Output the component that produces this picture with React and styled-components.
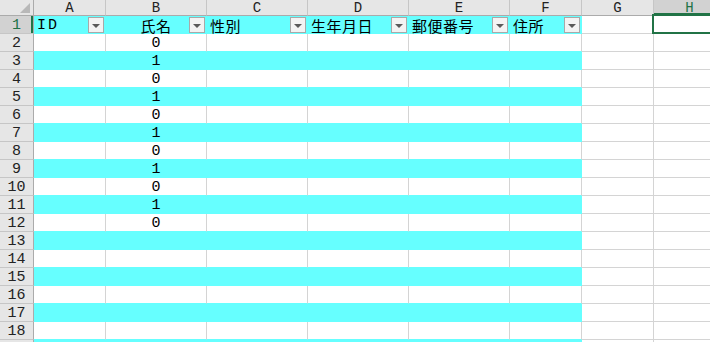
import React from 'react';
import styled, { createGlobalStyle, css } from 'styled-components';

const GlobalStyle = createGlobalStyle`
  html, body {
    margin: 0;
    padding: 0;
    background: #ffffff;
    overflow: hidden;
  }
`;

const COLS = [
  { key: 'A', width: 72 },
  { key: 'B', width: 101 },
  { key: 'C', width: 101 },
  { key: 'D', width: 101 },
  { key: 'E', width: 101 },
  { key: 'F', width: 72 },
  { key: 'G', width: 72 },
  { key: 'H', width: 72 },
];

const TABLE_COLS = 6;
const ROW_COUNT = 19;
const VISIBLE_LABELS = 18;
const SELECTED_COL = 'H';

const HEADERS = [
  { text: 'ID', align: 'left' },
  { text: '氏名', align: 'center' },
  { text: '性別', align: 'left' },
  { text: '生年月日', align: 'left' },
  { text: '郵便番号', align: 'left' },
  { text: '住所', align: 'left' },
];

const CYAN = '#66ffff';
const GRID = '#d4d4d4';
const HEAD_LINE = '#ababab';
const GREEN = '#217346';

const Sheet = styled.div`
  display: grid;
  grid-template-columns: 34px ${COLS.map((c) => c.width + 'px').join(' ')};
  grid-template-rows: 16px;
  grid-auto-rows: 18px;
  width: 800px;
  font-family: "Liberation Mono", "Noto Sans CJK JP", monospace;
  color: #000;
`;

const Corner = styled.div`
  position: relative;
  background: #e6e6e6;
  border-right: 1px solid ${HEAD_LINE};
  border-bottom: 1px solid ${HEAD_LINE};
  box-sizing: border-box;
  &::after {
    content: "";
    position: absolute;
    right: 3px;
    bottom: 2px;
    width: 0;
    height: 0;
    border-left: 10px solid transparent;
    border-bottom: 10px solid #b8b8b8;
  }
`;

const ColHead = styled.div`
  display: flex;
  align-items: center;
  justify-content: center;
  box-sizing: border-box;
  background: ${(p) => (p.$active ? '#d2d2d2' : '#e6e6e6')};
  color: ${(p) => (p.$active ? GREEN : '#222')};
  border-right: 1px solid ${(p) => (p.$active ? '#9b9b9b' : '#c6c6c6')};
  border-bottom: 1px solid ${HEAD_LINE};
  ${(p) => p.$active && css`box-shadow: inset 0 -2px 0 ${GREEN};`}
  font-size: 14px;
  line-height: 1;
  padding-top: 1px;
`;

const RowHead = styled.div`
  display: flex;
  align-items: center;
  justify-content: center;
  box-sizing: border-box;
  background: ${(p) => (p.$active ? '#d2d2d2' : '#e6e6e6')};
  color: ${(p) => (p.$active ? GREEN : '#222')};
  border-right: 1px solid ${HEAD_LINE};
  border-bottom: 1px solid #c6c6c6;
  ${(p) => p.$active && css`box-shadow: inset -2px 0 0 ${GREEN};`}
  font-size: 15px;
  line-height: 1;
  padding-top: 1px;
`;

const Cell = styled.div`
  position: relative;
  display: flex;
  align-items: center;
  justify-content: ${(p) => (p.$align === 'center' ? 'center' : 'flex-start')};
  box-sizing: border-box;
  padding: 1px 3px 0 3px;
  background: ${(p) => (p.$fill ? CYAN : '#ffffff')};
  border-right: 1px solid ${(p) => (p.$fill ? CYAN : GRID)};
  border-bottom: 1px solid ${(p) => (p.$fill || p.$belowFill ? CYAN : GRID)};
  font-size: 15px;
  line-height: 1;
  white-space: nowrap;
`;

const HeaderText = styled.span`
  font-family: "Noto Sans CJK JP", sans-serif;
  font-size: 15px;
  letter-spacing: 0.5px;
  ${(p) => p.$latin && css`font-family: "Liberation Mono", monospace; letter-spacing: 2px;`}
`;

const FilterButton = styled.div`
  position: absolute;
  right: 1px;
  top: 1px;
  width: 16px;
  height: 16px;
  box-sizing: border-box;
  background: #f3f3f3;
  border: 1px solid #a9a9a9;
  display: flex;
  align-items: center;
  justify-content: center;
  &::before {
    content: "";
    width: 0;
    height: 0;
    border-left: 4px solid transparent;
    border-right: 4px solid transparent;
    border-top: 4px solid #5a5a5a;
    margin-top: 1px;
  }
`;

const Selection = styled.div`
  position: absolute;
  left: -2px;
  top: -2px;
  right: -2px;
  bottom: -1px;
  border: 2px solid ${GREEN};
  pointer-events: none;
`;

export default function App() {
  const rows = Array.from({ length: ROW_COUNT }, (_, i) => i + 1);

  return (
    <>
      <GlobalStyle />
      <Sheet>
        <Corner />
        {COLS.map((c) => (
          <ColHead key={c.key} $active={c.key === SELECTED_COL}>
            {c.key}
          </ColHead>
        ))}

        {rows.map((r) => {
          const striped = r % 2 === 1;
          return (
            <React.Fragment key={r}>
              <RowHead $active={r === 1}>{r <= VISIBLE_LABELS ? r : null}</RowHead>
              {COLS.map((c, ci) => {
                const inTable = ci < TABLE_COLS;
                const fill = inTable && striped;
                const belowFill = inTable && !striped;
                let content = null;
                let align = 'left';

                if (r === 1 && inTable) {
                  const h = HEADERS[ci];
                  align = h.align;
                  content = (
                    <>
                      <HeaderText $latin={h.text === 'ID'}>{h.text}</HeaderText>
                      <FilterButton />
                    </>
                  );
                } else if (c.key === 'B' && r >= 2 && r <= 12) {
                  align = 'center';
                  content = r % 2 === 0 ? '0' : '1';
                }

                return (
                  <Cell
                    key={c.key}
                    $fill={fill}
                    $belowFill={belowFill}
                    $align={align}
                  >
                    {content}
                    {r === 1 && c.key === SELECTED_COL && <Selection />}
                  </Cell>
                );
              })}
            </React.Fragment>
          );
        })}
      </Sheet>
    </>
  );
}
